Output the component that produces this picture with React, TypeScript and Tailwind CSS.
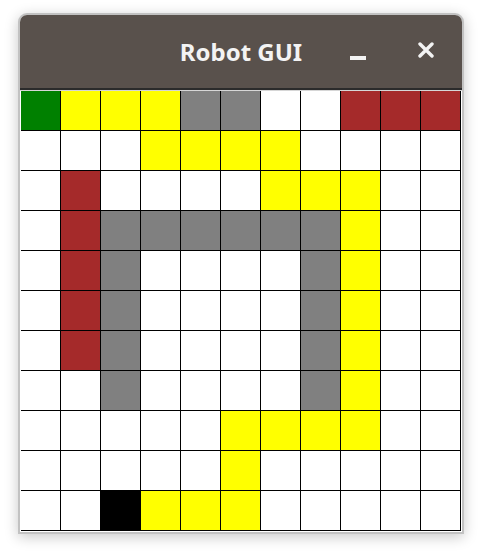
import React from "react";

type Cell = "W" | "G" | "Y" | "S" | "B" | "K";

const colors: Record<Cell, string> = {
  W: "bg-white",
  G: "bg-[#008000]",
  Y: "bg-[#ffff00]",
  S: "bg-[#808080]",
  B: "bg-[#a52a2a]",
  K: "bg-black",
};

// one string per row, 11 cells each
const rows = [
  "GYYYSSWWBBB",
  "WWWYYYYWWWW",
  "WBWWWWYYYWW",
  "WBSSSSSSYWW",
  "WBSWWWWSYWW",
  "WBSWWWWSYWW",
  "WBSWWWWSYWW",
  "WWSWWWWSYWW",
  "WWWWWYYYYWW",
  "WWWWWYWWWWW",
  "WWKYYYWWWWW",
];

const App: React.FC = () => {
  return (
    <div className="min-h-[552px] bg-white pt-[13px] pl-[18px]">
      {/* Window */}
      <div className="w-[446px] rounded-t-[9px] border-2 border-[#c2c2c2] bg-white overflow-hidden shadow-[0_3px_14px_rgba(0,0,0,0.22)]">
        {/* Title bar */}
        <div className="relative h-[75px] bg-[#59514c] flex items-center justify-center border-b-2 border-[#2b2b2b]">
          <span
            className="text-[24px] font-bold text-[#f3f3f3] leading-none"
            style={{ fontFamily: '"Noto Sans", "Open Sans", sans-serif' }}
          >
            Robot GUI
          </span>
          <div className="absolute left-[330px] top-[41px] w-[16px] h-[4px] bg-[#f3f3f3]" />
          <svg
            className="absolute left-[398px] top-[27px]"
            width="16"
            height="16"
            viewBox="0 0 16 16"
          >
            <path d="M2 2 L14 14 M14 2 L2 14" stroke="#f3f3f3" strokeWidth="3.4" strokeLinecap="round" />
          </svg>
        </div>

        {/* Board */}
        <div className="border-t border-[#d6d6d6] px-px pb-px">
          {rows.map((row, r) => (
            <div key={r} className="flex">
              {row.split("").map((c, i) => (
                <div
                  key={i}
                  className={`w-[40px] h-[40px] border-r border-b border-black ${colors[c as Cell]}`}
                />
              ))}
            </div>
          ))}
        </div>
      </div>
    </div>
  );
};

export default App;
